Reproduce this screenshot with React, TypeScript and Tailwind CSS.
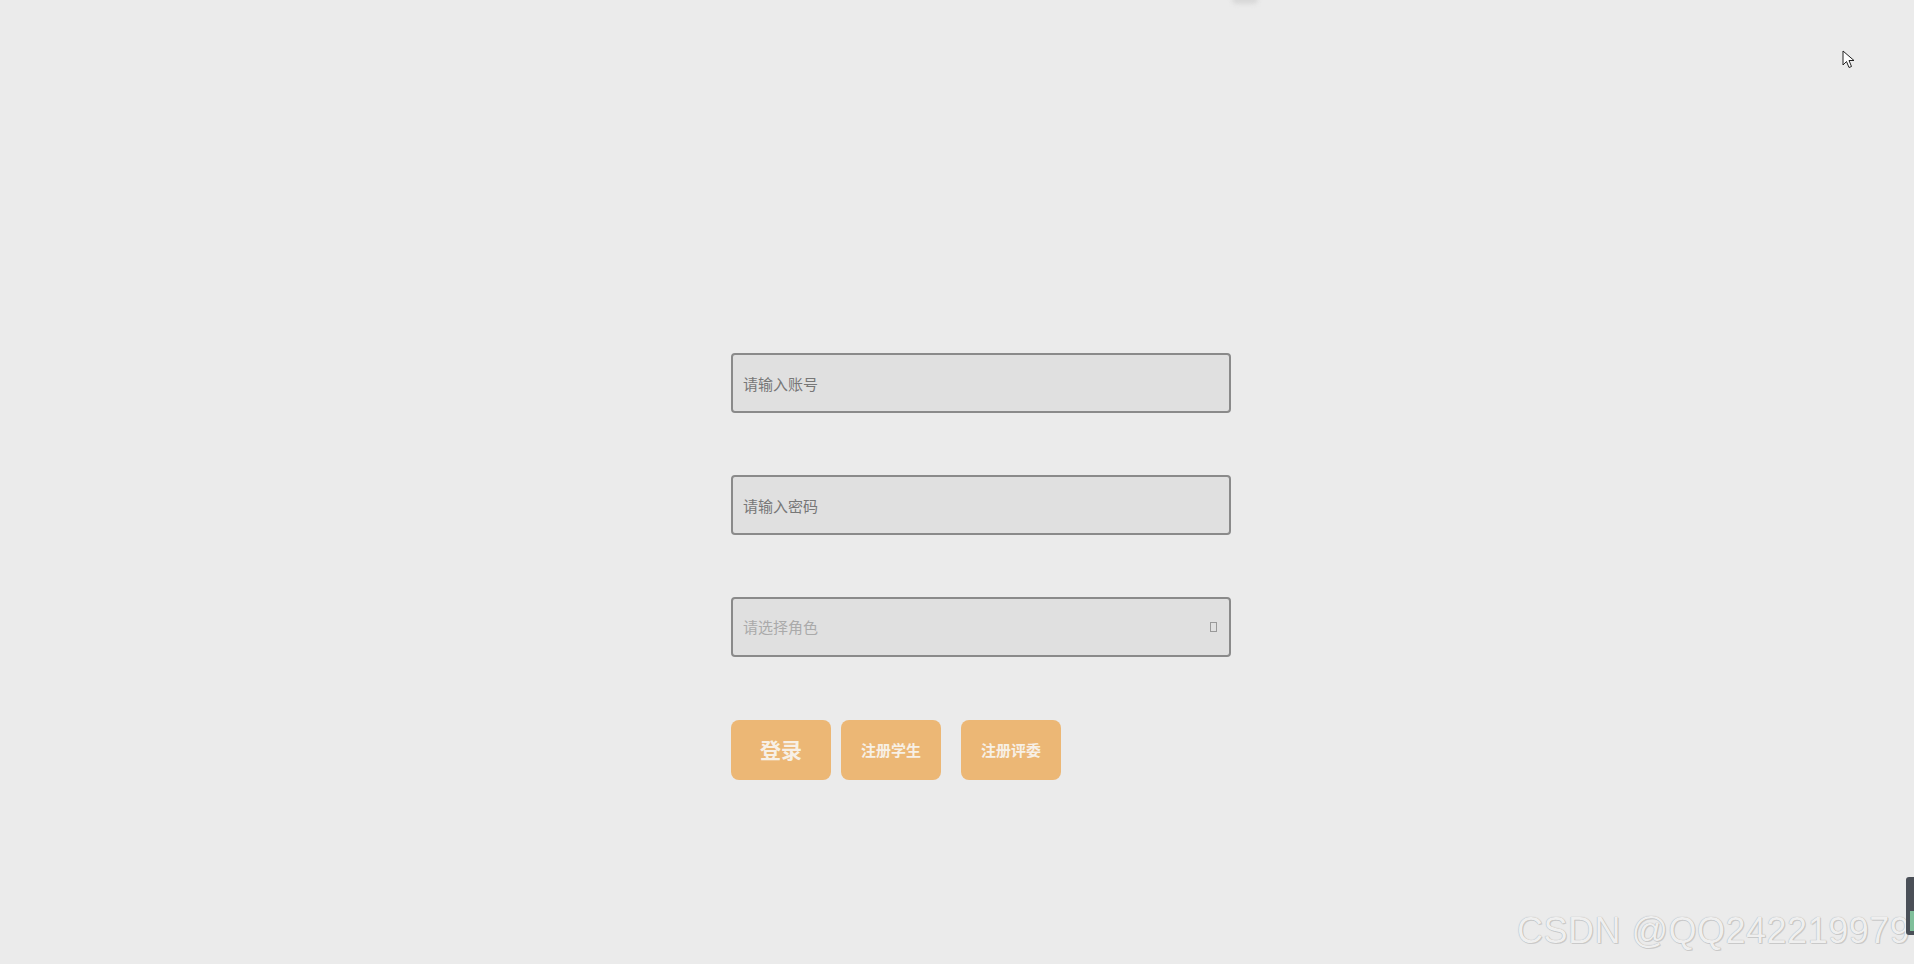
import React, { useState } from 'react';

const font = { fontFamily: '"Noto Sans CJK SC", "Noto Sans", sans-serif' };

export default function App() {
  const [account, setAccount] = useState('');
  const [password, setPassword] = useState('');
  const [role, setRole] = useState('');

  return (
    <div className="relative w-[1914px] h-[964px] overflow-hidden bg-[#ebebeb]" style={font}>
      {/* top stray blob */}
      <div className="absolute left-[1232px] -top-[6px] w-[26px] h-[10px] rounded-full bg-[#d8d8d8] blur-[2px]" />

      <div className="flex flex-col pt-[353px] pl-[731px]">
        <div className="flex flex-col gap-[62px] w-[500px]">
          <input
            value={account}
            onChange={(e) => setAccount(e.target.value)}
            placeholder="请输入账号"
            className="h-[60px] w-full px-[10px] rounded-[4px] border-2 border-[#8a8a8a] bg-[#e0e0e0] text-[15px] text-[#555] placeholder:text-[#777] outline-none"
          />
          <input
            type="password"
            value={password}
            onChange={(e) => setPassword(e.target.value)}
            placeholder="请输入密码"
            className="h-[60px] w-full px-[10px] rounded-[4px] border-2 border-[#8a8a8a] bg-[#e0e0e0] text-[15px] text-[#555] placeholder:text-[#777] outline-none"
          />
          <div className="relative h-[60px] w-full rounded-[4px] border-2 border-[#8a8a8a] bg-[#e0e0e0] flex items-center justify-between px-[10px]">
            <span className={`text-[15px] ${role ? 'text-[#555]' : 'text-[#aaa]'}`}>
              {role || '请选择角色'}
            </span>
            <span className="mr-[2px] w-[7px] h-[10px] border border-[#999]" onClick={() => setRole('')} />
          </div>
        </div>

        <div className="flex mt-[63px] h-[60px]">
          <button className="w-[100px] h-[60px] rounded-[8px] bg-[#ecb775] text-[#f7f0e6] text-[21px] font-bold">
            登录
          </button>
          <button className="ml-[10px] w-[100px] h-[60px] rounded-[8px] bg-[#ecb775] text-[#f7f0e6] text-[15px] font-bold">
            注册学生
          </button>
          <button className="ml-[20px] w-[100px] h-[60px] rounded-[8px] bg-[#ecb775] text-[#f7f0e6] text-[15px] font-bold">
            注册评委
          </button>
        </div>
      </div>

      {/* mouse cursor */}
      <svg className="absolute left-[1842px] top-[50px]" width="14" height="20" viewBox="0 0 14 20">
        <path d="M1 1 L1 15 L4.5 11.5 L7 17.5 L9.5 16.5 L7 10.5 L12 10.5 Z" fill="#fff" stroke="#222" strokeWidth="1" strokeLinejoin="round" />
      </svg>

      {/* watermark */}
      <div
        className="absolute left-[1517px] top-[913px] text-[36px] leading-none tracking-[0.5px] text-[#efefef] whitespace-nowrap"
        style={{ fontFamily: '"Liberation Sans", Arial, sans-serif', textShadow: '0 0 1px #9a9a9a, 1px 1px 0 #cfcfcf' }}
      >
        CSDN @QQ242219979
      </div>
      <div className="absolute left-[1906px] top-[877px] w-[10px] h-[58px] rounded-l-[3px] bg-[#4a4f57] flex items-end">
        <div className="ml-[4px] mb-[4px] w-[5px] h-[20px] bg-[#7fbf9a]" />
      </div>
    </div>
  );
}
